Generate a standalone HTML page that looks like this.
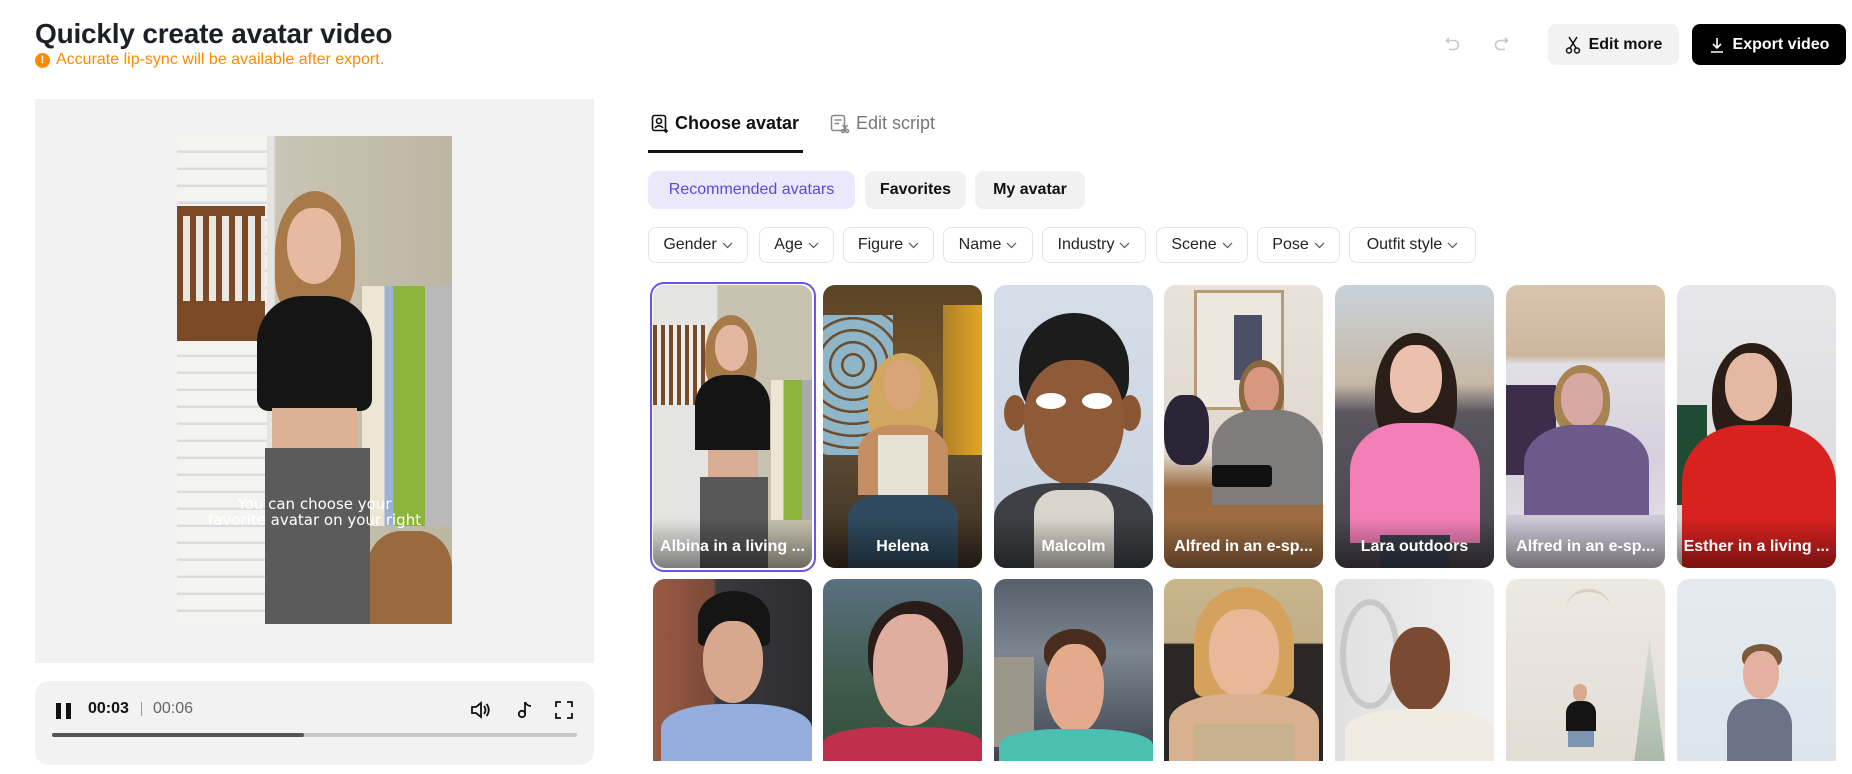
<!DOCTYPE html>
<html><head><meta charset="utf-8">
<style>
*{box-sizing:border-box;margin:0;padding:0}
body{width:1852px;height:774px;overflow:hidden;background:#fff;font-family:"Liberation Sans",Arial,sans-serif;color:#111;position:relative}
.abs{position:absolute}
h1{position:absolute;left:35px;top:18px;font-size:28px;font-weight:700;color:#1c1f26;letter-spacing:-0.2px}
.warn{position:absolute;left:35px;top:51px;font-size:16px;color:#ff8a00;display:flex;align-items:center;gap:6px}
.warn i{width:15px;height:15px;border-radius:50%;background:#ff8a00;color:#fff;font-style:normal;font-size:11px;font-weight:700;display:flex;align-items:center;justify-content:center}
.btn{position:absolute;top:24px;height:41px;border-radius:8px;display:flex;align-items:center;justify-content:center;gap:8px;font-size:16px;font-weight:700}
.panel{left:35px;top:99px;width:559px;height:564px;background:#f2f2f2}
.video{left:177px;top:136px;width:275px;height:488px;overflow:hidden;background:linear-gradient(90deg,#d9d8d4 0,#e6e5e1 35%,#c9c4b5 36%,#bdb6a3 100%)}
.ctrl{left:35px;top:681px;width:559px;height:84px;border-radius:14px;background:#f2f2f2}
.tab{position:absolute;top:113px;font-size:18px;font-weight:700;display:flex;align-items:center;gap:6px}
.chip{position:absolute;top:171px;height:38px;border-radius:9px;background:#f1f1f1;font-size:16px;font-weight:700;display:flex;align-items:center;justify-content:center}
.flt{position:absolute;top:227px;height:36px;border:1px solid #e4e4e4;border-radius:8px;font-size:16px;display:flex;align-items:center;justify-content:center;gap:5px;color:#222}
.flt svg{width:11px;height:7px}
.card{position:absolute;width:159px;border-radius:12px;overflow:hidden}
.r1{top:285px;height:283px}
.r2{top:579px;height:182px;border-radius:12px 12px 0 0}
.card div{position:absolute}
.lbl{left:0;right:0;bottom:0;height:50px;background:linear-gradient(transparent,rgba(0,0,0,.45));color:#fff;font-weight:700;font-size:16px;text-align:center;padding-top:20px;white-space:nowrap}
.hair{border-radius:50% 50% 40% 40%}
.face{border-radius:45% 45% 50% 50%}
.body{border-radius:40% 40% 0 0}
</style></head><body>
<h1>Quickly create avatar video</h1>
<div class="warn"><i>!</i>Accurate lip-sync will be available after export.</div>

<svg class="abs" style="left:1444px;top:35px" width="18" height="18" viewBox="0 0 18 18" fill="none" stroke="#c8c8c8" stroke-width="1.6"><path d="M5 3 L2.5 5.5 L5 8"/><path d="M3 5.5 H10 A4.5 4.5 0 0 1 10 14.5 H5"/></svg>
<svg class="abs" style="left:1492px;top:35px" width="18" height="18" viewBox="0 0 18 18" fill="none" stroke="#c8c8c8" stroke-width="1.6"><path d="M13 3 L15.5 5.5 L13 8"/><path d="M15 5.5 H8 A4.5 4.5 0 0 0 8 14.5 H13"/></svg>

<div class="btn" style="left:1548px;width:131px;background:#f2f2f2;color:#111">
<svg width="16" height="18" viewBox="0 0 16 18" fill="none" stroke="#111" stroke-width="1.5"><path d="M4 1 L11 12 M12 1 L5 12"/><circle cx="4" cy="14.5" r="2.5"/><circle cx="12" cy="14.5" r="2.5"/></svg>Edit more</div>
<div class="btn" style="left:1692px;width:154px;background:#000;color:#fff">
<svg width="16" height="18" viewBox="0 0 16 18" fill="none" stroke="#fff" stroke-width="1.6"><path d="M8 2 V12 M4 8 L8 12 L12 8 M2 16 H14"/></svg>Export video</div>

<div class="abs panel"></div>
<div class="abs video">
 <div class="abs" style="left:0;top:0;width:90px;height:488px;background:repeating-linear-gradient(180deg,#f3f3f1 0,#f3f3f1 14px,#dcdcda 15px,#dcdcda 17px)"></div>
 <div class="abs" style="left:0;top:70px;width:88px;height:135px;background:repeating-linear-gradient(90deg,#7a4a26 0,#7a4a26 6px,#e9e7e2 6px,#e9e7e2 13px);border-top:10px solid #7a4a26;border-bottom:40px solid #7a4a26"></div>
 <div class="abs" style="left:185px;top:150px;width:90px;height:240px;background:linear-gradient(90deg,#ede6d4 0,#ede6d4 25%,#9ab2d3 25%,#9ab2d3 35%,#8db43d 35%,#8db43d 70%,#b9b9b9 70%)"></div>
 <div class="abs" style="left:190px;top:395px;width:85px;height:93px;background:#9a6a3f;border-radius:40% 40% 0 0"></div>
 <div class="abs" style="left:98px;top:55px;width:80px;height:125px;background:#a87a4a;border-radius:50% 50% 30% 30%"></div>
 <div class="abs" style="left:110px;top:72px;width:54px;height:76px;background:#e6b9a0;border-radius:45% 45% 50% 50%"></div>
 <div class="abs" style="left:80px;top:160px;width:115px;height:115px;background:#151515;border-radius:40% 40% 10% 10%"></div>
 <div class="abs" style="left:95px;top:272px;width:85px;height:45px;background:#ddb096"></div>
 <div class="abs" style="left:88px;top:312px;width:105px;height:176px;background:#5b5b5b"></div>
 <div class="abs" style="left:0;right:0;top:360px;text-align:center;color:#fff;font-size:15px;line-height:16px;font-family:'DejaVu Sans',sans-serif">You can choose your<br>favorite avatar on your right</div>
</div>

<div class="abs ctrl"></div>
<div class="abs" style="left:56px;top:703px;width:5px;height:16px;background:#111"></div>
<div class="abs" style="left:66px;top:703px;width:5px;height:16px;background:#111"></div>
<div class="abs" style="left:88px;top:700px;font-size:16px;font-weight:700">00:03</div>
<div class="abs" style="left:141px;top:702px;width:1px;height:14px;background:#999"></div>
<div class="abs" style="left:153px;top:700px;font-size:16px;color:#666">00:06</div>
<svg class="abs" style="left:470px;top:700px" width="22" height="20" viewBox="0 0 22 20" fill="none" stroke="#111" stroke-width="1.8"><path d="M2 7 H6 L11 3 V17 L6 13 H2 Z"/><path d="M14 6 Q17 10 14 14 M16.5 4 Q21 10 16.5 16"/></svg>
<svg class="abs" style="left:515px;top:700px" width="20" height="20" viewBox="0 0 20 20" fill="none" stroke="#111" stroke-width="1.8"><path d="M10 2 V14"/><circle cx="7" cy="14" r="3.2"/><path d="M10 2 Q12 6 16 6"/></svg>
<svg class="abs" style="left:554px;top:700px" width="20" height="20" viewBox="0 0 20 20" fill="none" stroke="#111" stroke-width="1.8"><path d="M2 7 V2 H7 M13 2 H18 V7 M18 13 V18 H13 M7 18 H2 V13"/></svg>
<div class="abs" style="left:52px;top:733px;width:525px;height:4px;border-radius:2px;background:#c8c8c8"></div>
<div class="abs" style="left:52px;top:733px;width:252px;height:4px;border-radius:2px;background:#555"></div>

<div class="tab" style="left:651px;color:#111"><svg width="18" height="20" viewBox="0 0 18 20" fill="none" stroke="#111" stroke-width="1.6"><rect x="1.5" y="1.5" width="13" height="15" rx="2"/><circle cx="8" cy="7" r="2.5"/><path d="M4 14 Q8 9.5 12 14"/><path d="M15 15 V19 M13 17 H17"/></svg>Choose avatar</div>
<div class="tab" style="left:830px;color:#777;font-weight:400"><svg width="20" height="20" viewBox="0 0 20 20" fill="none" stroke="#888" stroke-width="1.5"><rect x="1.5" y="1.5" width="13" height="15" rx="2"/><path d="M4.5 6 H11.5 M4.5 9.5 H9"/><circle cx="13" cy="17" r="1.5"/><circle cx="17" cy="17" r="1.5"/><path d="M12.5 11 L16.5 16 M17.5 11 L13.5 16"/></svg>Edit script</div>
<div class="abs" style="left:648px;top:150px;width:155px;height:3px;background:#111"></div>

<div class="chip" style="left:648px;width:207px;background:#ebe8fc;color:#5b49e0;font-weight:400">Recommended avatars</div>
<div class="chip" style="left:865px;width:101px">Favorites</div>
<div class="chip" style="left:975px;width:110px">My avatar</div>

<div class="flt" style="left:648px;width:100px">Gender<svg viewBox="0 0 11 7" fill="none" stroke="#555" stroke-width="1.2"><path d="M1 1 L5.5 5.5 L10 1"/></svg></div>
<div class="flt" style="left:759px;width:75px">Age<svg viewBox="0 0 11 7" fill="none" stroke="#555" stroke-width="1.2"><path d="M1 1 L5.5 5.5 L10 1"/></svg></div>
<div class="flt" style="left:843px;width:91px">Figure<svg viewBox="0 0 11 7" fill="none" stroke="#555" stroke-width="1.2"><path d="M1 1 L5.5 5.5 L10 1"/></svg></div>
<div class="flt" style="left:943px;width:90px">Name<svg viewBox="0 0 11 7" fill="none" stroke="#555" stroke-width="1.2"><path d="M1 1 L5.5 5.5 L10 1"/></svg></div>
<div class="flt" style="left:1042px;width:104px">Industry<svg viewBox="0 0 11 7" fill="none" stroke="#555" stroke-width="1.2"><path d="M1 1 L5.5 5.5 L10 1"/></svg></div>
<div class="flt" style="left:1156px;width:92px">Scene<svg viewBox="0 0 11 7" fill="none" stroke="#555" stroke-width="1.2"><path d="M1 1 L5.5 5.5 L10 1"/></svg></div>
<div class="flt" style="left:1257px;width:83px">Pose<svg viewBox="0 0 11 7" fill="none" stroke="#555" stroke-width="1.2"><path d="M1 1 L5.5 5.5 L10 1"/></svg></div>
<div class="flt" style="left:1349px;width:127px">Outfit style<svg viewBox="0 0 11 7" fill="none" stroke="#555" stroke-width="1.2"><path d="M1 1 L5.5 5.5 L10 1"/></svg></div>

<div class="abs" style="left:650px;top:282px;width:166px;height:290px;border:2.5px solid #6a55e8;border-radius:14px"></div>

<div class="card r1" style="left:653px;background:linear-gradient(90deg,#e4e4e2 0,#e4e4e2 40%,#c8c2b1 41%)">
 <div style="left:0;top:40px;width:52px;height:80px;background:repeating-linear-gradient(90deg,#7a4a26 0,#7a4a26 4px,#eee 4px,#eee 8px)"></div>
 <div style="left:118px;top:95px;width:41px;height:140px;background:linear-gradient(90deg,#ede6d4 30%,#8db43d 30%,#8db43d 75%,#aaa 75%)"></div>
 <div class="hair" style="left:52px;top:30px;width:52px;height:80px;background:#a87a4a"></div>
 <div class="face" style="left:62px;top:40px;width:33px;height:46px;background:#e4b8a0"></div>
 <div class="body" style="left:42px;top:90px;width:75px;height:75px;background:#141414"></div>
 <div style="left:55px;top:165px;width:50px;height:30px;background:#d9ad93"></div>
 <div style="left:47px;top:192px;width:68px;height:91px;background:#575757"></div>
 <div class="lbl">Albina in a living ...</div>
</div>
<div class="card r1" style="left:823px;background:linear-gradient(180deg,#5a4326 0,#7a5a2c 45%,#5a4a34 60%,#3a2d20 100%)">
 <div style="left:0;top:30px;width:70px;height:140px;background:repeating-radial-gradient(circle at 30px 50px,#8fb5c8 0,#8fb5c8 9px,#6d4b28 10px,#6d4b28 12px)"></div>
 <div style="left:120px;top:20px;width:39px;height:150px;background:linear-gradient(90deg,#b0802a,#e2a623)"></div>
 <div class="hair" style="left:45px;top:68px;width:70px;height:100px;background:#d0a660"></div>
 <div class="face" style="left:60px;top:75px;width:38px;height:50px;background:#d8a478"></div>
 <div class="body" style="left:35px;top:140px;width:90px;height:70px;background:#c48e62"></div>
 <div style="left:55px;top:150px;width:50px;height:60px;background:#e8e2d5"></div>
 <div style="left:25px;top:210px;width:110px;height:73px;background:#2f4a5e;border-radius:30% 30% 0 0"></div>
 <div class="lbl">Helena</div>
</div>
<div class="card r1" style="left:994px;background:linear-gradient(180deg,#d5dde8,#c8d3e0)">
 <div class="hair" style="left:25px;top:28px;width:110px;height:110px;background:#1c1c1c"></div>
 <div style="left:10px;top:110px;width:22px;height:36px;background:#8a5634;border-radius:50%"></div>
 <div style="left:125px;top:110px;width:22px;height:36px;background:#8a5634;border-radius:50%"></div>
 <div class="face" style="left:30px;top:75px;width:100px;height:125px;background:#8e5a38"></div>
 <div style="left:42px;top:108px;width:30px;height:16px;background:#fff;border-radius:50%"></div>
 <div style="left:88px;top:108px;width:30px;height:16px;background:#fff;border-radius:50%"></div>
 <div class="body" style="left:0;top:198px;width:159px;height:85px;background:#3e4045"></div>
 <div style="left:40px;top:205px;width:80px;height:78px;background:#d9d4cc;border-radius:30% 30% 0 0"></div>
 <div class="lbl">Malcolm</div>
</div>
<div class="card r1" style="left:1164px;background:linear-gradient(180deg,#e8e2da 0,#e0d8ce 60%,#9a6a40 72%,#a06e42 100%)">
 <div style="left:30px;top:5px;width:90px;height:120px;border:3px solid #b89c7a;background:#ece7df"></div>
 <div style="left:70px;top:30px;width:28px;height:65px;background:#4b4f66"></div>
 <div class="hair" style="left:75px;top:75px;width:45px;height:60px;background:#8a6840"></div>
 <div class="face" style="left:80px;top:82px;width:35px;height:48px;background:#d89780"></div>
 <div class="body" style="left:48px;top:125px;width:111px;height:95px;background:#7f7d7b"></div>
 <div style="left:0;top:110px;width:45px;height:70px;background:#2a2436;border-radius:40%"></div>
 <div style="left:48px;top:180px;width:60px;height:22px;background:#111;border-radius:4px"></div>
 <div class="lbl">Alfred in an e-sp...</div>
</div>
<div class="card r1" style="left:1335px;background:linear-gradient(180deg,#c8d2dc 0,#c7b8a4 35%,#5a5660 45%,#47434c 100%)">
 <div class="hair" style="left:40px;top:48px;width:82px;height:120px;background:#2a1e18"></div>
 <div class="face" style="left:55px;top:60px;width:52px;height:68px;background:#ebc0ac"></div>
 <div class="body" style="left:15px;top:138px;width:130px;height:120px;background:#f27fb7"></div>
 <div style="left:45px;top:250px;width:70px;height:33px;background:#3a3f4d"></div>
 <div class="lbl">Lara outdoors</div>
</div>
<div class="card r1" style="left:1506px;background:linear-gradient(180deg,#d9c4ae 0,#cdb69e 25%,#e2e0e6 28%,#d6d0dc 60%,#e6e2e8 100%)">
 <div style="left:0;top:100px;width:50px;height:90px;background:#3c2e4a"></div>
 <div class="hair" style="left:48px;top:80px;width:56px;height:70px;background:#a88350"></div>
 <div class="face" style="left:55px;top:88px;width:42px;height:54px;background:#d8a9a2"></div>
 <div class="body" style="left:18px;top:140px;width:125px;height:95px;background:#6c5a8a"></div>
 <div style="left:0;top:230px;width:159px;height:53px;background:#cfc8d6"></div>
 <div class="lbl">Alfred in an e-sp...</div>
</div>
<div class="card r1" style="left:1677px;background:linear-gradient(180deg,#e7e7ea,#d8d8dc)">
 <div style="left:0;top:120px;width:30px;height:100px;background:#1f4a34"></div>
 <div class="hair" style="left:35px;top:58px;width:80px;height:110px;background:#2a1d16"></div>
 <div class="face" style="left:48px;top:68px;width:52px;height:68px;background:#e5b8a3"></div>
 <div class="body" style="left:5px;top:140px;width:154px;height:143px;background:#d7221f"></div>
 <div class="lbl">Esther in a living ...</div>
</div>

<div class="card r2" style="left:653px;background:linear-gradient(90deg,#9a5a44 0,#7a4a3a 38%,#3a3a3c 40%,#2c2c30 100%)">
 <div class="hair" style="left:45px;top:12px;width:72px;height:55px;background:#151515;border-radius:50% 50% 10% 10%"></div>
 <div class="face" style="left:50px;top:42px;width:60px;height:82px;background:#d8a88e"></div>
 <div class="body" style="left:8px;top:125px;width:151px;height:60px;background:#94addc"></div>
</div>
<div class="card r2" style="left:823px;background:linear-gradient(180deg,#5a7080,#3d5a4a 60%,#34503c)">
 <div class="hair" style="left:45px;top:22px;width:95px;height:95px;background:#2a1c18"></div>
 <div class="face" style="left:50px;top:35px;width:75px;height:112px;background:#dfae9e"></div>
 <div class="body" style="left:0;top:148px;width:159px;height:40px;background:#c0304c"></div>
</div>
<div class="card r2" style="left:994px;background:linear-gradient(180deg,#56606a 0,#7d8690 40%,#3a434e 100%)">
 <div style="left:0;top:78px;width:40px;height:90px;background:#9d968a"></div>
 <div class="hair" style="left:50px;top:50px;width:62px;height:45px;background:#4a2c1e"></div>
 <div class="face" style="left:52px;top:65px;width:58px;height:90px;background:#e3ab8c"></div>
 <div class="body" style="left:5px;top:150px;width:154px;height:40px;background:#4cc0b0"></div>
</div>
<div class="card r2" style="left:1164px;background:linear-gradient(180deg,#c9b68a 0,#c0ad88 35%,#2c2624 36%,#2c2624 100%)">
 <div class="hair" style="left:30px;top:8px;width:100px;height:110px;background:#d4a25c;border-radius:50% 50% 10% 10%"></div>
 <div class="face" style="left:45px;top:30px;width:70px;height:90px;background:#e8b898"></div>
 <div class="body" style="left:5px;top:115px;width:150px;height:70px;background:#d8b190"></div>
 <div style="left:30px;top:145px;width:100px;height:40px;background:#c8b18e"></div>
</div>
<div class="card r2" style="left:1335px;background:linear-gradient(90deg,#e0e0e0,#f0f0f0)">
 <div style="left:5px;top:20px;width:60px;height:110px;border:6px solid #c8c8c8;border-radius:50%"></div>
 <div class="face" style="left:55px;top:48px;width:60px;height:85px;background:#7a4b32"></div>
 <div class="body" style="left:10px;top:130px;width:149px;height:55px;background:#f0ece2"></div>
</div>
<div class="card r2" style="left:1506px;background:linear-gradient(180deg,#ece8e2,#e3ddd6)">
 <div style="left:60px;top:10px;width:45px;height:40px;border-top:3px solid #d8d2bc;border-radius:50%"></div>
 <div style="left:128px;top:60px;width:31px;height:125px;background:linear-gradient(#d9dcd9,#a8b8a8);clip-path:polygon(50% 0,100% 100%,0 100%)"></div>
 <div class="face" style="left:67px;top:105px;width:14px;height:18px;background:#d9a98f"></div>
 <div class="body" style="left:60px;top:122px;width:30px;height:30px;background:#141414"></div>
 <div style="left:62px;top:152px;width:26px;height:16px;background:#7c94b0"></div>
</div>
<div class="card r2" style="left:1677px;background:linear-gradient(180deg,#e4ebf0,#dce5ec)">
 <div class="hair" style="left:65px;top:65px;width:40px;height:25px;background:#7a5a3a"></div>
 <div class="face" style="left:66px;top:72px;width:36px;height:48px;background:#e4b0a0"></div>
 <div class="body" style="left:50px;top:120px;width:65px;height:65px;background:#6a7486"></div>
</div>
</body></html>
